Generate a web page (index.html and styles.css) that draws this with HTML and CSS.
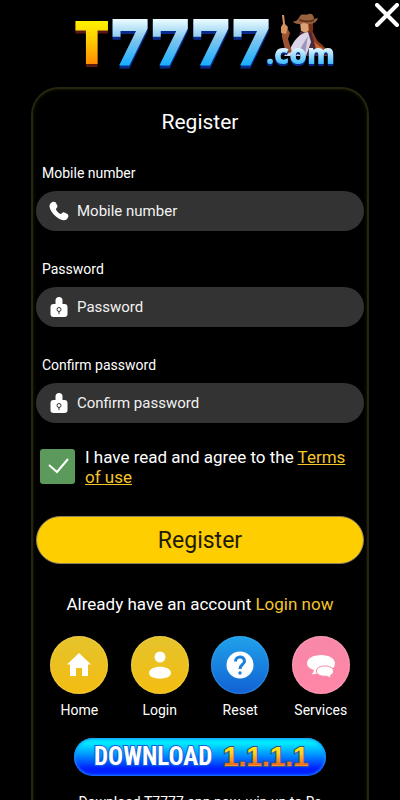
FILE: index.html
```html
<!DOCTYPE html>
<html lang="en">
<head>
    <meta charset="UTF-8">
    <meta name="viewport" content="width=device-width, initial-scale=1.0">
    <title>T7777 - Register</title>
    <link rel="stylesheet" href="styles.css">
</head>
<body>
<div class="page">

    <button class="close-btn" type="button" aria-label="Close">
        <svg viewBox="0 0 24 24"><path d="M2 2L22 22M22 2L2 22"/></svg>
    </button>

    <!-- Logo -->
    <header class="logo">
        <svg viewBox="0 0 264 58" role="img" aria-label="T7777.com">
            <defs>
                <linearGradient id="gold" gradientUnits="userSpaceOnUse" x1="0" y1="8" x2="0" y2="52">
                    <stop offset="0" stop-color="#fff200"/>
                    <stop offset=".4" stop-color="#ffd000"/>
                    <stop offset="1" stop-color="#ff8a00"/>
                </linearGradient>
                <linearGradient id="ice" gradientUnits="userSpaceOnUse" x1="0" y1="7" x2="0" y2="52">
                    <stop offset="0" stop-color="#e8faff"/>
                    <stop offset=".45" stop-color="#7cc4ee"/>
                    <stop offset="1" stop-color="#18aeff"/>
                </linearGradient>
                <linearGradient id="iceSmall" gradientUnits="userSpaceOnUse" x1="0" y1="34" x2="0" y2="53">
                    <stop offset="0" stop-color="#eefbff"/>
                    <stop offset="1" stop-color="#28b4ff"/>
                </linearGradient>
            </defs>
            <text class="logo-t" x="6" y="51" fill="url(#gold)">T</text>
            <text class="logo-7" x="42" y="50" fill="url(#ice)" stroke="url(#ice)">7777</text>

            <!-- Cowgirl -->
            <g>
                <path fill="#8f3c1c" d="M241 15C247 19 247 27 252 30C256 33 257 36 261 38L256 40L260 43L234 43L233 25Z"/>
                <path fill="#c96a32" d="M242 23C246 29 250 33 256 36L251 35L254 41L245 35Z"/>
                <path fill="#4b2a3c" d="M232 19L243 18L250 43H228Z"/>
                <path fill="#dcd5e8" d="M240 19C231 20 226 28 222 36L216 43H238L243 29Z"/>
                <path fill="#9c96bd" d="M240 23L237 42H229L235 31Z"/>
                <path fill="#9b5233" d="M214 16L219 15L222 20L220 26L224 39L218 41L214 24Z"/>
                <path fill="#d79463" d="M214 2L216 2L217 11L220 14L218 21L213 20L213 14L215 11Z"/>
                <path fill="#dda070" d="M232 9L242 9L242 16L238 20L233 18Z"/>
                <path fill="#793018" d="M240 8L245 9L245 18L241 20Z"/>
                <path fill="#9a613d" d="M225 8C228 9 230 7 232 3C234 0 238 3 241 1C245 0 246 4 246 6L250 5C248 11 242 12 236 10C231 12 226 11 225 8Z"/>
                <path fill="#5b2d1c" d="M232 6C237 8 242 8 246 6L246 8C241 10 236 9 231 8Z"/>
            </g>

            <text class="logo-com" x="198" y="51" fill="url(#iceSmall)">.com</text>
        </svg>
    </header>

    <!-- Register card -->
    <main class="card">
        <h1>Register</h1>

        <form class="register-form">
            <div class="field">
                <label for="mobile">Mobile number</label>
                <div class="input-box">
                    <svg class="field-icon" viewBox="0 0 20 20"><path d="M1.500 2.500C3 .5 5.500 .2 6.800 1.500L8.500 5C8.800 6.500 7.200 7.200 6.900 8.200C7.700 10.200 9.400 12 11.700 13C12.800 12.600 13.500 11 14.800 11.200L18.500 13C20 14.500 19.500 16.800 17.500 18.400C15.500 20 11.500 19.200 7.500 16C3.500 12.800 .8 8.500 .5 5.500C.4 4.300 .8 3.200 1.500 2.500Z"/></svg>
                    <input id="mobile" type="tel" placeholder="Mobile number">
                </div>
            </div>

            <div class="field">
                <label for="password">Password</label>
                <div class="input-box">
                    <svg class="field-icon" viewBox="0 0 20 20">
                        <path d="M6.500 8V3.500Q6.500 0 10 0T13.500 3.500V8Z"/>
                        <rect x="1.500" y="7" width="17" height="13" rx="3"/>
                        <path class="keyhole" d="M10 14.500V17M10 10.500A2 2 0 1 1 10 14.500A2 2 0 1 1 10 10.500Z"/>
                    </svg>
                    <input id="password" type="password" placeholder="Password">
                </div>
            </div>

            <div class="field">
                <label for="confirm">Confirm password</label>
                <div class="input-box">
                    <svg class="field-icon" viewBox="0 0 20 20">
                        <path d="M6.500 8V3.500Q6.500 0 10 0T13.500 3.500V8Z"/>
                        <rect x="1.500" y="7" width="17" height="13" rx="3"/>
                        <path class="keyhole" d="M10 14.500V17M10 10.500A2 2 0 1 1 10 14.500A2 2 0 1 1 10 10.500Z"/>
                    </svg>
                    <input id="confirm" type="password" placeholder="Confirm password">
                </div>
            </div>

            <div class="agree">
                <span class="check">
                    <input id="agree" type="checkbox" checked>
                    <svg viewBox="0 0 35 35"><path d="M9 16L17 23L28 10"/></svg>
                </span>
                <label for="agree">I have read and agree to the <a href="#terms">Terms of use</a></label>
            </div>

            <button class="submit-btn" type="submit">Register</button>
        </form>

        <p class="have-account">Already have an account <a href="#login">Login now</a></p>

        <nav class="shortcuts">
            <a href="#home">
                <span class="circle gold">
                    <svg viewBox="0 0 58 58"><path d="M29 17L41 28.500H38V40H32V32H26V40H20V28.500H17Z"/></svg>
                </span>
                Home
            </a>
            <a href="#login">
                <span class="circle gold">
                    <svg viewBox="0 0 58 58"><circle cx="29" cy="21" r="5.500"/><path d="M18 37C18 28.500 40 28.500 40 37C40 44.500 18 44.500 18 37Z"/></svg>
                </span>
                Login
            </a>
            <a href="#reset">
                <span class="circle blue">
                    <svg viewBox="0 0 58 58"><circle cx="29" cy="29" r="13.500"/><path class="question" d="M24.500 25.500C24.500 19.500 33.500 19.500 33.500 25.200C33.500 28.500 29 28.500 29 33"/><circle class="question-dot" cx="29" cy="37" r="1.700"/></svg>
                </span>
                Reset
            </a>
            <a href="#services">
                <span class="circle pink">
                    <svg viewBox="0 0 58 58"><path d="M29 19C37 19 43 22.500 43 27.500C43 33 36 36 28.500 35.500C25.500 38 22 38.500 19.500 38C21 37 22 35.500 22 34C17.500 32.500 15 30.500 15 27.500C15 22.500 21 19 29 19Z"/><path class="small-bubble" d="M33 30C38 30 41.500 32 41.500 35C41.500 37 40.500 38.300 38.500 39.200C38.500 40.300 39 41 39.500 41.500C37.500 41.500 36 41 35 40.200C28.500 40.800 24.500 38.500 24.500 35C24.500 32 28 30 33 30Z"/></svg>
                </span>
                Services
            </a>
        </nav>

        <a class="download-btn" href="#download">
            <svg viewBox="0 0 252 38" role="img" aria-label="Download 1.1.1.1">
                <defs>
                    <linearGradient id="fire" gradientUnits="userSpaceOnUse" x1="0" y1="6" x2="0" y2="29">
                        <stop offset="0" stop-color="#fff600"/>
                        <stop offset=".4" stop-color="#ffd21c"/>
                        <stop offset=".9" stop-color="#f06a1c"/>
                        <stop offset="1" stop-color="#ffe04a"/>
                    </linearGradient>
                </defs>
                <text class="dl-word" x="20" y="27">DOWNLOAD</text>
                <text class="dl-num" x="149" y="28" fill="url(#fire)">1.1.1.1</text>
            </svg>
        </a>

        <p class="promo">Download T7777 app now, win up to Rs</p>
    </main>

</div>
</body>
</html>
```
FILE: styles.css
```css
/* Reset and Basic Styles */
* {
    margin: 0;
    padding: 0;
    box-sizing: border-box;
}
body {
    font-family: Roboto, Arial, sans-serif;
    background-color: #000;
    color: #fff;
}
.page {
    position: relative;
    height: 100vh;
    padding: 13px 31px 0;
    overflow-y: auto;
    scrollbar-width: none;
}

.close-btn {
    position: absolute;
    top: 2px;
    right: 0;
    width: 26px;
    height: 26px;
    background: none;
    border: none;
    cursor: pointer;
}
.close-btn svg {
    display: block;
    width: 24px;
    height: 24px;
    margin: 0 auto;
    fill: none;
    stroke: #fff;
    stroke-width: 4;
    stroke-linecap: round;
}

/* Logo */
.logo svg {
    display: block;
    width: 264px;
    height: 58px;
    margin: 0 auto;
    overflow: visible;
}
.logo-t {
    font: 800 60px "Open Sans", sans-serif;
    filter: drop-shadow(0 3px 0 #5c1616);
}
.logo-7 {
    font: bold 58px "DejaVu Serif", serif;
    stroke-width: 4;
    filter: drop-shadow(0 3px 0 #0a2a8c);
}
.logo-com {
    font: 800 28px "Open Sans", sans-serif;
    filter: drop-shadow(0 2px 0 #0a2a8c);
}

/* Register card */
.card {
    margin-top: 16px;
    padding: 17px 3px 40px;
    border: 2px solid #26260f;
    border-radius: 28px;
    box-shadow: inset 0 0 3px #26260a;
}
.card h1 {
    font-size: 21px;
    line-height: 32px;
    font-weight: normal;
    text-align: center;
}
.register-form {
    padding-top: 21px;
}
.field {
    margin-bottom: 24px;
}
.field label {
    display: block;
    padding-left: 6px;
    margin-bottom: 4px;
    font-size: 14px;
    line-height: 28px;
}
.input-box {
    display: flex;
    align-items: center;
    gap: 8px;
    height: 40px;
    padding: 0 13px;
    background-color: #333;
    border-radius: 20px;
}
.field-icon {
    flex: none;
    width: 20px;
    height: 20px;
    fill: #fff;
}
.keyhole {
    fill: none;
    stroke: #333;
    stroke-width: 1;
}
.input-box input {
    flex: 1;
    min-width: 0;
    font: 15px Roboto, Arial, sans-serif;
    color: #fff;
    background: none;
    border: none;
    outline: none;
}
.input-box input::placeholder {
    color: #f2f2f2;
}

/* Terms */
.agree {
    display: flex;
    gap: 10px;
    padding: 0 8px 0 4px;
    font-size: 17px;
    line-height: 20px;
}
.check {
    position: relative;
    flex: none;
    width: 35px;
    height: 35px;
    margin-top: 2px;
}
.check input {
    display: block;
    width: 100%;
    height: 100%;
    appearance: none;
    background-color: #5c9a5c;
    border-radius: 3px;
}
.check svg {
    position: absolute;
    inset: 0;
    fill: none;
    stroke: #fff;
    stroke-width: 2;
    pointer-events: none;
    visibility: hidden;
}
.check input:checked + svg {
    visibility: visible;
}
.agree a,
.have-account a {
    color: #f5c52c;
}

.submit-btn {
    display: block;
    width: 100%;
    height: 48px;
    margin-top: 29px;
    font: 23px Roboto, Arial, sans-serif;
    color: #201a08;
    background-color: #ffce00;
    border: 1px solid #8c8064;
    border-radius: 24px;
    cursor: pointer;
}

.have-account {
    margin: 28px 0 20px;
    font-size: 17px;
    line-height: 24px;
    text-align: center;
}
.have-account a {
    text-decoration: none;
}

/* Shortcuts */
.shortcuts {
    display: grid;
    grid-template-columns: repeat(4, 1fr);
    padding: 0 3px;
}
.shortcuts a {
    display: flex;
    flex-direction: column;
    align-items: center;
    gap: 6px;
    font-size: 14px;
    line-height: 20px;
    color: #fff;
    text-decoration: none;
}
.circle {
    width: 58px;
    height: 58px;
    border-radius: 50%;
}
.circle svg {
    display: block;
    fill: #fff;
}
.gold {
    background: linear-gradient(#e5c32c, #f3bd12);
    box-shadow: inset 0 0 2px #ffe477;
}
.blue {
    background: linear-gradient(#20a2ea, #1261d3);
    box-shadow: inset 0 0 2px #54b7ff;
}
.pink {
    background: linear-gradient(#f888a8, #ff86a6);
    box-shadow: inset 0 0 2px #ffc2d2;
}
.question {
    fill: none;
    stroke: #1b7fdc;
    stroke-width: 3;
}
.question-dot {
    fill: #1b7fdc;
}
.small-bubble {
    stroke: #fa87a7;
    stroke-width: 1;
}

/* Download */
.download-btn {
    display: block;
    width: 252px;
    height: 38px;
    margin: 18px auto 14px;
    background: linear-gradient(#00e8ff 15%, #0090ff 45%, #0020ff 80%);
    border-radius: 19px;
    box-shadow: inset 0 0 3px 1px #1e8cff;
}
.download-btn svg {
    display: block;
}
.dl-word {
    font: bold 25px "Liberation Sans Narrow", "Roboto Condensed", "DejaVu Sans Condensed", sans-serif;
    fill: #fff;
    stroke: #1560dc;
    stroke-width: 2;
    paint-order: stroke;
}
.dl-num {
    font: bold 28px "Liberation Sans", Arial, sans-serif;
    stroke: #34508c;
    stroke-width: 2;
    paint-order: stroke;
}
.promo {
    font-size: 14px;
    line-height: 24px;
    text-align: center;
}
```
